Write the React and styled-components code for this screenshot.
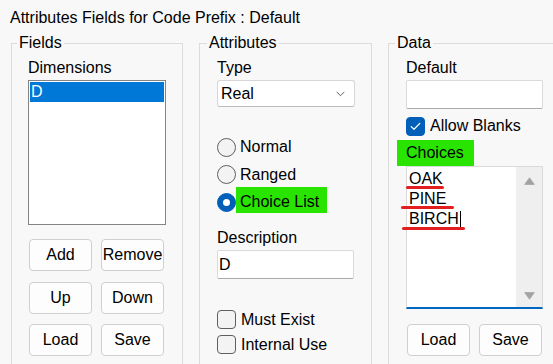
import React from 'react';
import styled, { createGlobalStyle } from 'styled-components';

const Global = createGlobalStyle`
  html, body { margin: 0; padding: 0; background: #f8f8f8; }
  body { font-family: "Liberation Sans", Arial, sans-serif; font-size: 16px; color: #000; }
  * { box-sizing: border-box; }
`;

const Page = styled.div`
  width: 553px;
  height: 364px;
  overflow: hidden;
  background: #f8f8f8;
  padding: 8px 0 0 10px;
`;

const Title = styled.div`
  line-height: 20px;
  white-space: nowrap;
`;

const Panels = styled.div`
  display: flex;
  gap: 16px;
  margin: 5px 0 0 1px;
`;

const Group = styled.fieldset`
  flex: 0 0 ${(p) => p.$w}px;
  width: ${(p) => p.$w}px;
  height: 360px;
  margin: 0;
  padding: 0;
  min-width: 0;
  border: 1px solid #dcdcdc;
`;

const Legend = styled.legend`
  margin-left: ${(p) => p.$lm}px;
  padding: 0 2px;
  line-height: 20px;
`;

const Content = styled.div`
  display: flex;
  flex-direction: column;
  align-items: flex-start;
  padding: 5px 0 0 ${(p) => p.$pl}px;
`;

const Label = styled.div`
  line-height: 20px;
  margin-top: ${(p) => p.$mt || 0}px;
  margin-bottom: 2px;
`;

const ListBox = styled.div`
  width: 138px;
  height: 145px;
  border: 1px solid #848484;
  background: #fff;
  padding: 1px;
`;

const ListItem = styled.div`
  height: 20px;
  line-height: 20px;
  padding-left: 1px;
  background: ${(p) => (p.$selected ? '#0078d7' : 'transparent')};
  color: ${(p) => (p.$selected ? '#fff' : '#000')};
`;

const ButtonGrid = styled.div`
  display: grid;
  grid-template-columns: 63px 63px;
  column-gap: 9px;
  row-gap: 10.5px;
  margin: ${(p) => p.$mt}px 0 0 1px;
`;

const Button = styled.button`
  height: 32px;
  padding: 0;
  background: #fdfdfd;
  border: 1px solid #d0d0d0;
  border-radius: 4px;
  font: inherit;
  color: #000;
  white-space: nowrap;
`;

const Select = styled.div`
  width: 138px;
  height: 27px;
  display: flex;
  align-items: center;
  justify-content: space-between;
  padding: 0 9px 0 3px;
  background: #fff;
  border: 1px solid #d6d6d6;
  border-bottom-color: #bcbcbc;
  border-radius: 3px;
`;

const TextField = styled.input`
  width: 137px;
  height: 29px;
  padding: 0 1px;
  margin: 0;
  font: inherit;
  color: #000;
  background: #fff;
  border: 1px solid #dadada;
  border-bottom-color: #a9a9a9;
  border-radius: 2px;
  outline: none;
`;

const RadioGroup = styled.div`
  margin-top: 26.25px;
`;

const OptionRow = styled.div`
  display: flex;
  align-items: center;
  height: ${(p) => p.$h}px;
`;

const Radio = styled.span`
  flex: 0 0 19px;
  width: 19px;
  height: 19px;
  border-radius: 50%;
  display: flex;
  align-items: center;
  justify-content: center;
  background: ${(p) => (p.$checked ? '#005fb8' : '#f3f3f3')};
  border: 1px solid ${(p) => (p.$checked ? '#005fb8' : '#5f5f5f')};
  &::after {
    content: '';
    display: ${(p) => (p.$checked ? 'block' : 'none')};
    width: 7px;
    height: 7px;
    border-radius: 50%;
    background: #fff;
  }
`;

const OptionLabel = styled.span`
  line-height: 20px;
  padding: 5px 8px 1px 4px;
  margin-bottom: 4px;
  background: ${(p) => (p.$hl ? '#28e400' : 'transparent')};
`;

const ChecksGroup = styled.div`
  margin-top: ${(p) => p.$mt}px;
`;

const CheckBox = styled.span`
  flex: 0 0 19px;
  width: 19px;
  height: 19px;
  border-radius: 4px;
  display: flex;
  align-items: center;
  justify-content: center;
  background: ${(p) => (p.$checked ? '#005fb8' : '#f3f3f3')};
  border: 1px solid ${(p) => (p.$checked ? '#005fb8' : '#5f5f5f')};
`;

const CheckLabel = styled.span`
  line-height: 20px;
  padding-left: 5px;
`;

const Highlight = styled.div`
  margin: 1.5px 0 0 -9px;
  padding: 0 10px 0 9px;
  line-height: 26px;
  background: #28e400;
`;

const TextArea = styled.div`
  width: 137px;
  height: 143px;
  display: flex;
  background: #fff;
  border: 1px solid #dadada;
  border-bottom: 2px solid #0067c0;
`;

const TextBody = styled.div`
  flex: 1;
  padding: 1.7px 0 0 2px;
`;

const Line = styled.div`
  position: relative;
  height: 20px;
  line-height: 20px;
  white-space: nowrap;
`;

const Underline = styled.span`
  position: absolute;
  left: ${(p) => p.$l}px;
  top: ${(p) => p.$t}px;
  width: ${(p) => p.$w}px;
  height: 3px;
  border-radius: 2px;
  background: #e31e1e;
`;

const Caret = styled.span`
  display: inline-block;
  width: 1px;
  height: 17px;
  margin-left: 1.5px;
  vertical-align: -4px;
  background: #000;
`;

const ScrollBar = styled.div`
  flex: 0 0 26px;
  width: 26px;
  display: flex;
  flex-direction: column;
  justify-content: space-between;
  align-items: center;
  padding: 10px 0 7.5px 1px;
  background: #efefef;
`;

const Arrow = ({ down }) => (
  <svg width="11" height="8" viewBox="0 0 11 8" style={down ? { transform: 'rotate(180deg)' } : undefined}>
    <path d="M5.5 0.8 L10.3 7.4 L0.7 7.4 Z" fill="#a3a3a3" stroke="#a3a3a3" strokeWidth="0.8" strokeLinejoin="round" />
  </svg>
);

const Chevron = () => (
  <svg width="9" height="6" viewBox="0 0 9 6">
    <path d="M0.7 0.9 L4.5 4.7 L8.3 0.9" fill="none" stroke="#5d5d5d" strokeWidth="1" />
  </svg>
);

const Tick = () => (
  <svg width="11" height="9" viewBox="0 0 11 9">
    <path d="M1.2 4.6 L4 7.3 L9.8 1.4" fill="none" stroke="#fff" strokeWidth="1.3" strokeLinecap="round" strokeLinejoin="round" />
  </svg>
);

export default function App() {
  return (
    <>
      <Global />
      <Page>
        <Title>Attributes Fields for Code Prefix : Default</Title>
        <Panels>
          <Group $w={172}>
            <Legend $lm={5}>Fields</Legend>
            <Content $pl={16}>
              <Label>Dimensions</Label>
              <ListBox>
                <ListItem $selected>D</ListItem>
              </ListBox>
              <ButtonGrid $mt={14}>
                <Button>Add</Button>
                <Button>Remove</Button>
                <Button>Up</Button>
                <Button>Down</Button>
                <Button>Load</Button>
                <Button>Save</Button>
              </ButtonGrid>
            </Content>
          </Group>

          <Group $w={173}>
            <Legend $lm={7}>Attributes</Legend>
            <Content $pl={17}>
              <Label>Type</Label>
              <Select>
                <span>Real</span>
                <Chevron />
              </Select>
              <RadioGroup>
                <OptionRow $h={27.5}>
                  <Radio />
                  <OptionLabel>Normal</OptionLabel>
                </OptionRow>
                <OptionRow $h={27.5}>
                  <Radio />
                  <OptionLabel>Ranged</OptionLabel>
                </OptionRow>
                <OptionRow $h={27.5}>
                  <Radio $checked />
                  <OptionLabel $hl>Choice List</OptionLabel>
                </OptionRow>
              </RadioGroup>
              <Label $mt={12.25}>Description</Label>
              <TextField readOnly value="D" />
              <ChecksGroup $mt={28}>
                <OptionRow $h={25}>
                  <CheckBox />
                  <CheckLabel>Must Exist</CheckLabel>
                </OptionRow>
                <OptionRow $h={25}>
                  <CheckBox />
                  <CheckLabel>Internal Use</CheckLabel>
                </OptionRow>
              </ChecksGroup>
            </Content>
          </Group>

          <Group $w={180}>
            <Legend $lm={6}>Data</Legend>
            <Content $pl={17}>
              <Label>Default</Label>
              <TextField readOnly value="" />
              <ChecksGroup $mt={4.5}>
                <OptionRow $h={25}>
                  <CheckBox $checked>
                    <Tick />
                  </CheckBox>
                  <CheckLabel>Allow Blanks</CheckLabel>
                </OptionRow>
              </ChecksGroup>
              <Highlight>Choices</Highlight>
              <TextArea>
                <TextBody>
                  <Line>
                    OAK
                    <Underline $l={-3} $t={17.3} $w={38} />
                  </Line>
                  <Line>
                    PINE
                    <Underline $l={-8} $t={17.3} $w={53} />
                  </Line>
                  <Line>
                    BIRCH
                    <Caret />
                    <Underline $l={-7} $t={18.6} $w={63} />
                  </Line>
                </TextBody>
                <ScrollBar>
                  <Arrow />
                  <Arrow down />
                </ScrollBar>
              </TextArea>
              <ButtonGrid $mt={15}>
                <Button>Load</Button>
                <Button>Save</Button>
              </ButtonGrid>
            </Content>
          </Group>
        </Panels>
      </Page>
    </>
  );
}
